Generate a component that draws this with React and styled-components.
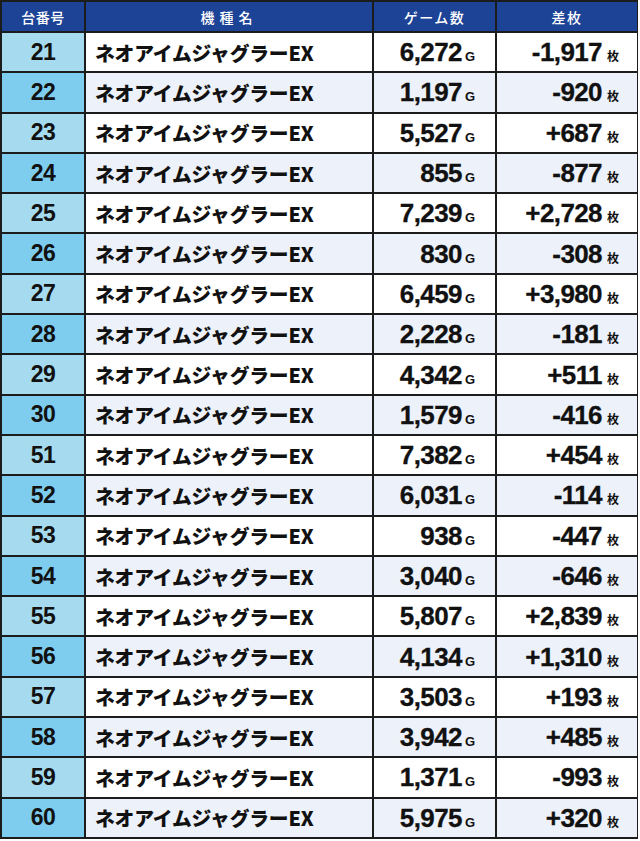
import React from "react";
import styled, { createGlobalStyle } from "styled-components";

const rows = [
  [21, "6,272", "-1,917"],
  [22, "1,197", "-920"],
  [23, "5,527", "+687"],
  [24, "855", "-877"],
  [25, "7,239", "+2,728"],
  [26, "830", "-308"],
  [27, "6,459", "+3,980"],
  [28, "2,228", "-181"],
  [29, "4,342", "+511"],
  [30, "1,579", "-416"],
  [51, "7,382", "+454"],
  [52, "6,031", "-114"],
  [53, "938", "-447"],
  [54, "3,040", "-646"],
  [55, "5,807", "+2,839"],
  [56, "4,134", "+1,310"],
  [57, "3,503", "+193"],
  [58, "3,942", "+485"],
  [59, "1,371", "-993"],
  [60, "5,975", "+320"],
];

const GlobalStyle = createGlobalStyle`
  body {
    margin: 0;
    background: #ffffff;
  }
`;

const Table = styled.div`
  width: 638px;
  display: grid;
  grid-template-columns: 82px 286px 121px 140px;
  grid-template-rows: 29px repeat(20, 38.3px);
  gap: 2px;
  padding: 2px;
  box-sizing: border-box;
  background: #1c1c1c;
`;

const HeadCell = styled.div`
  background: #1d4396;
  color: #ffffff;
  display: flex;
  align-items: center;
  justify-content: center;
  font-family: "Noto Sans CJK JP", sans-serif;
  font-weight: 500;
  font-size: 14px;
  letter-spacing: ${(props) => props.spacing || "0.5px"};
`;

const NoCell = styled.div`
  background: ${(props) => (props.even ? "#7ecdef" : "#a6dbef")};
  display: flex;
  align-items: center;
  justify-content: center;
  font-family: "Liberation Sans", Arial, sans-serif;
  font-weight: 700;
  font-size: 23px;
  letter-spacing: -0.5px;
  color: #111;
`;

const NameCell = styled.div`
  background: ${(props) => (props.even ? "#edf2fa" : "#ffffff")};
  display: flex;
  align-items: center;
  padding-left: 9px;
  font-family: "Noto Sans CJK JP", sans-serif;
  font-weight: 900;
  font-size: 19.8px;
  letter-spacing: -0.2px;
  color: #111;
`;

const ValueCell = styled.div`
  background: ${(props) => (props.even ? "#edf2fa" : "#ffffff")};
  display: flex;
  align-items: center;
  justify-content: flex-end;
  padding-right: ${(props) => props.pad};
  color: #111;
`;

const Line = styled.span`
  display: inline-flex;
  align-items: baseline;
  line-height: 1;
`;

const Num = styled.span`
  font-family: "Liberation Sans", Arial, sans-serif;
  font-weight: 700;
  font-size: 26px;
  letter-spacing: -0.6px;
  -webkit-text-stroke: 0.3px #111;
`;

const Unit = styled.span`
  font-family: ${(props) =>
    props.cjk ? '"Noto Sans CJK JP", sans-serif' : '"Liberation Sans", Arial, sans-serif'};
  font-weight: 700;
  font-size: ${(props) => (props.cjk ? "12px" : "13px")};
  margin-left: ${(props) => props.gap};
`;

export default function App() {
  return (
    <>
      <GlobalStyle />
      <Table>
        <HeadCell>台番号</HeadCell>
        <HeadCell spacing="5px">機種名</HeadCell>
        <HeadCell spacing="1.5px">ゲーム数</HeadCell>
        <HeadCell spacing="1.5px">差枚</HeadCell>
        {rows.map(([no, games, diff], i) => {
          const even = i % 2 === 1;
          return (
            <React.Fragment key={no}>
              <NoCell even={even}>{no}</NoCell>
              <NameCell even={even}>ネオアイムジャグラーEX</NameCell>
              <ValueCell even={even} pad="20px">
                <Line>
                  <Num>{games}</Num>
                  <Unit gap="3px">G</Unit>
                </Line>
              </ValueCell>
              <ValueCell even={even} pad="18px">
                <Line>
                  <Num>{diff}</Num>
                  <Unit cjk gap="5px">
                    枚
                  </Unit>
                </Line>
              </ValueCell>
            </React.Fragment>
          );
        })}
      </Table>
    </>
  );
}
